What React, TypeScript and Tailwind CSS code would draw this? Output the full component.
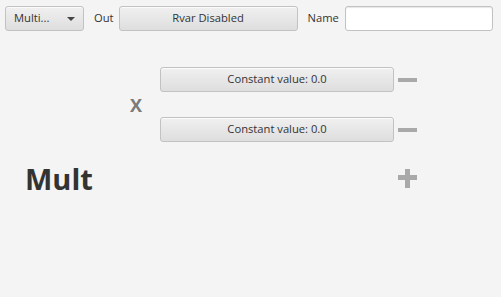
import React from "react";

const btn =
  "flex items-center justify-center rounded-[3px] border border-[#c2c2c2] bg-gradient-to-b from-[#f0f0f0] to-[#dedede] shadow-[inset_0_1px_0_#fbfbfb] text-[11.2px] text-[#333]";

export default function App() {
  return (
    <div
      className="w-[501px] h-[297px] bg-[#f4f4f4] overflow-hidden"
      style={{ fontFamily: '"Open Sans", "Noto Sans", sans-serif' }}
    >
      <div className="flex items-center pt-[6px] pl-[5px] h-[25px] box-content">
        <div className={btn + " w-[79px] h-[25px] !justify-between pl-[8px] pr-[8px]"}>
          <span>Multi...</span>
          <span className="w-0 h-0 border-l-[4px] border-r-[4px] border-t-[4px] border-l-transparent border-r-transparent border-t-[#444]" />
        </div>
        <span className="ml-[10px] text-[11.2px] text-[#333]">Out</span>
        <div className={btn + " ml-[5px] w-[179px] h-[25px]"}>Rvar Disabled</div>
        <span className="ml-[10px] text-[11.2px] text-[#333]">Name</span>
        <div className="ml-[6px] w-[148px] h-[25px] rounded-[3px] border border-[#c2c2c2] bg-white shadow-[inset_0_1px_1px_#e6e6e6]" />
      </div>
      <div className="flex items-center pl-[130px] mt-[36px]">
        <span className="w-[12px] text-[18px] font-bold text-[#7a7a7a] leading-none">X</span>
        <div className="ml-[18px] flex flex-col gap-[25px]">
          <div className="flex items-center">
            <div className={btn + " w-[234px] h-[25px]"}>Constant value: 0.0</div>
            <div className="ml-[4px] w-[19px] h-[4px] bg-[#a9a9a9]" />
          </div>
          <div className="flex items-center">
            <div className={btn + " w-[234px] h-[25px]"}>Constant value: 0.0</div>
            <div className="ml-[4px] w-[19px] h-[4px] bg-[#a9a9a9]" />
          </div>
        </div>
      </div>
      <div className="flex items-center mt-[22px] pl-[25px]">
        <span className="text-[29px] font-bold text-[#333] leading-none">Mult</span>
        <div className="ml-auto mr-[84px] relative w-[19px] h-[19px]">
          <div className="absolute left-0 top-[6px] w-[19px] h-[5px] bg-[#a9a9a9]" />
          <div className="absolute left-[7px] top-0 w-[5px] h-[19px] bg-[#a9a9a9]" />
        </div>
      </div>
    </div>
  );
}
